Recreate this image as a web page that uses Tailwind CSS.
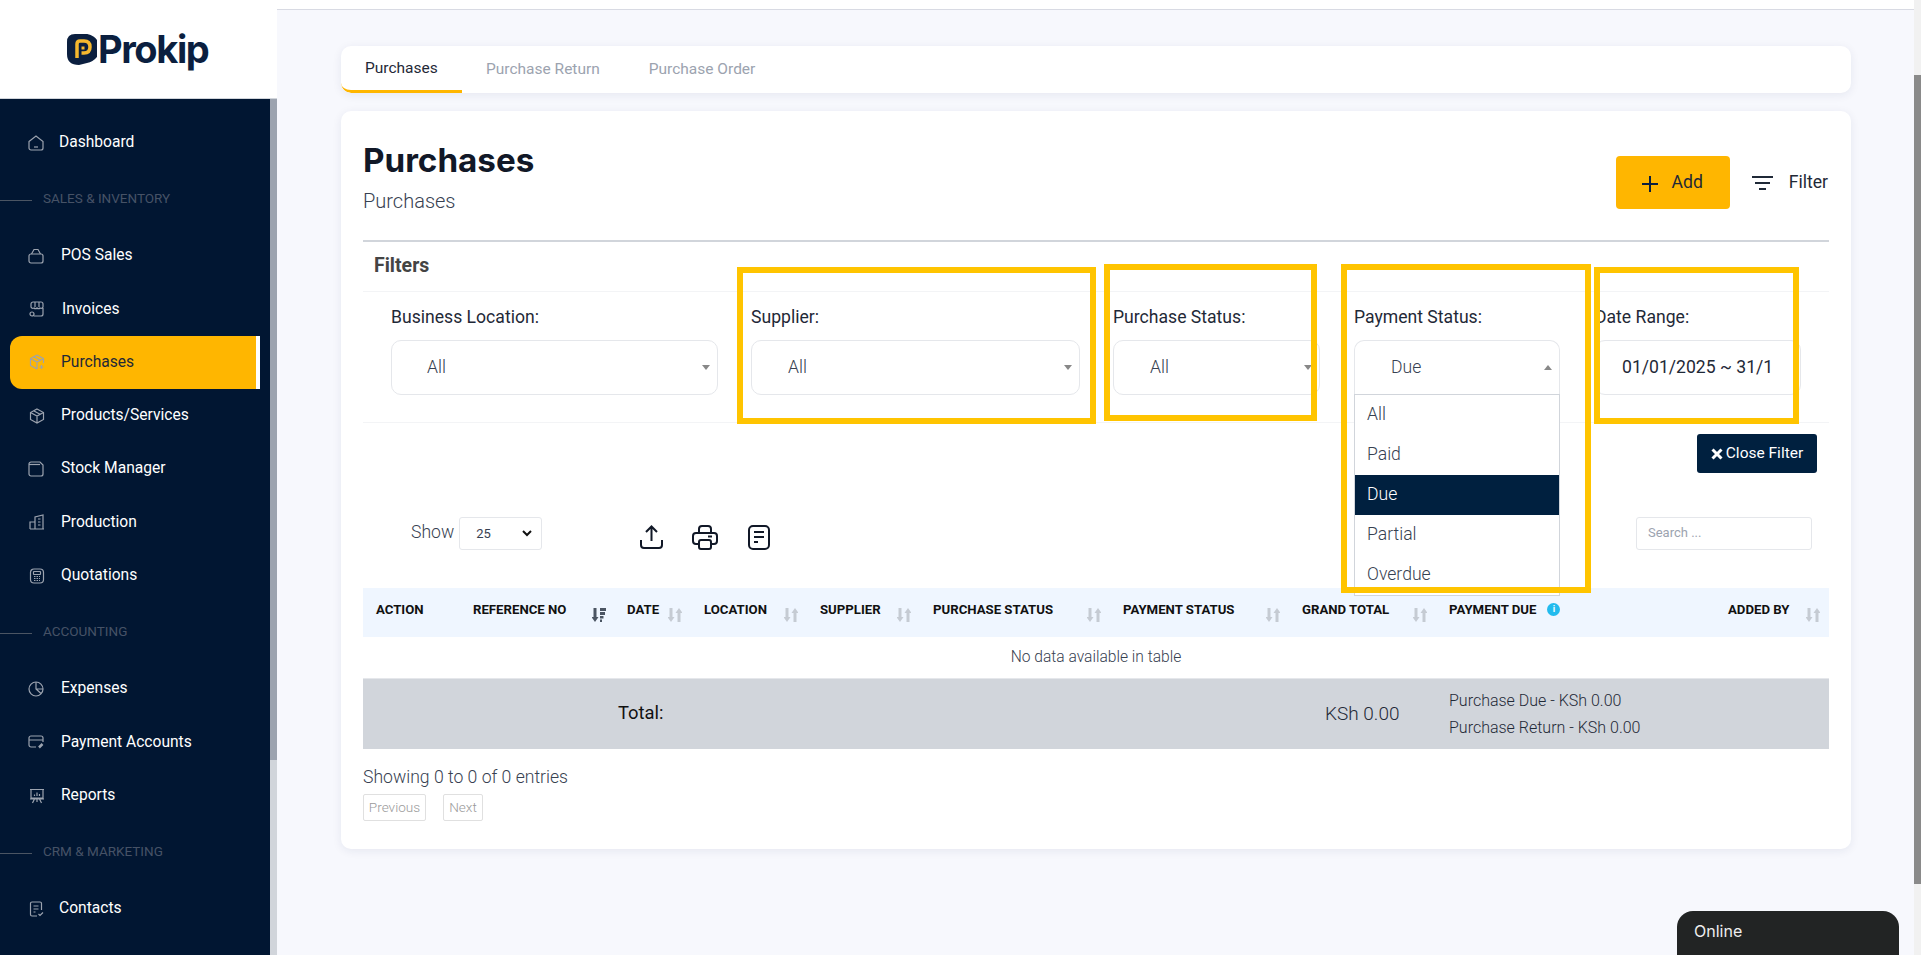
<!DOCTYPE html>
<html lang="en">
<head>
<meta charset="utf-8">
<title>Purchases</title>
<script src="https://cdn.jsdelivr.net/npm/@tailwindcss/browser@4"></script>
</head>
<body class="font-['Roboto',sans-serif] bg-[#f7f8fd]">
<div class="relative flex h-[955px] w-[1921px] overflow-hidden">

  <!-- sidebar -->
  <aside class="w-[277px] shrink-0 flex flex-col">
    <div class="h-[98px] bg-white flex items-center pl-[67px] shrink-0">
      <svg class="w-[30px] h-[31px] shrink-0" viewBox="0 0 30 31">
        <path d="M8 0H16A14.500 14.500 0 0 1 20 29L12 31Q0 31 0 20V8Q0 0 8 0Z" fill="#0b1f3f"/>
        <path d="M10 24V10Q10 7 13 7H17Q23 7 23 13T17 19H14.500" fill="none" stroke="#f5b82e" stroke-width="3.500"/>
        <path d="M14.500 14H17.500" stroke="#f5b82e" stroke-width="3"/>
      </svg>
      <span class="font-['Inter',sans-serif] font-bold text-[38px] tracking-[-1.4px] text-[#0b1f3f] ml-[1px]">Prokip</span>
    </div>
    <div class="flex flex-1 min-h-0 border-t border-[#d1d5db]">
      <nav class="w-[270px] bg-[#011632] pt-[17px] text-[15.600px] text-white overflow-hidden">
        <a class="h-[53.330px] flex items-center pl-[28px] gap-[15px]">
          <svg class="w-4 h-4 shrink-0 text-[#9ca3af]" viewBox="0 0 16 16" fill="none" stroke="currentColor" stroke-width="1.200"><path d="M1 6.500 8 1l7 5.500V13a2 2 0 0 1-2 2H3a2 2 0 0 1-2-2z"/><path d="M6 12h4"/></svg>
          <span>Dashboard</span>
        </a>
        <div class="h-[60px] flex items-center text-[13.500px] text-[#465266]"><span class="w-[32px] h-px bg-[#4b5563] mr-[11px] mt-[3px]"></span><span class="mt-[-2px]">SALES &amp; INVENTORY</span></div>
        <a class="h-[53.330px] flex items-center pl-[28px] gap-[17px]">
          <svg class="w-4 h-4 shrink-0 text-[#9ca3af]" viewBox="0 0 16 16" fill="none" stroke="currentColor" stroke-width="1.200"><path d="M1 8a2 2 0 0 1 2-2h10a2 2 0 0 1 2 2v5a2 2 0 0 1-2 2H3a2 2 0 0 1-2-2z"/><path d="M3.500 6 6 1.500h4L12.500 6"/></svg>
          <span>POS Sales</span>
        </a>
        <a class="h-[53.330px] flex items-center pl-[29px] gap-[17px]">
          <svg class="w-4 h-4 shrink-0 text-[#9ca3af]" viewBox="0 0 16 16" fill="none" stroke="currentColor" stroke-width="1.200"><path d="M2 6V3a2 2 0 0 1 2-2h8a2 2 0 0 1 2 2v3a2 2 0 0 1-3 1 2 2 0 0 1-3 0 2 2 0 0 1-3 0 2 2 0 0 1-3-1zM6 1v5M10 1v5M14 7v6a2 2 0 0 1-2 2H5"/><circle cx="3" cy="13" r="2"/></svg>
          <span>Invoices</span>
        </a>
        <a class="relative h-[53px] ml-[10px] mr-[10px] flex items-center pl-[19px] gap-[16px] bg-[#ffb600] rounded-l-[12px] border-r-4 border-white text-[#1f2937]">
          <svg class="w-4 h-4 shrink-0 text-[#9ca3af]" viewBox="0 0 16 16" fill="none" stroke="currentColor" stroke-width="1.200"><path d="M8 1 14.500 4.500V9M8 1 1.500 4.500v7L8 15M1.500 4.500 8 8l6.500-3.500M8 8v7M5 3l6.500 3.500"/><path d="M12.500 11v4M10.500 13h4"/></svg>
          <span>Purchases</span>
        </a>
        <a class="h-[53.330px] flex items-center pl-[29px] gap-[16px]">
          <svg class="w-4 h-4 shrink-0 text-[#9ca3af]" viewBox="0 0 16 16" fill="none" stroke="currentColor" stroke-width="1.200"><path d="M8 1l6.500 3.500v7L8 15l-6.500-3.500v-7zM1.500 4.500 8 8l6.500-3.500M8 8v7M5 3l6.500 3.500"/></svg>
          <span>Products/Services</span>
        </a>
        <a class="h-[53.330px] flex items-center pl-[28px] gap-[17px]">
          <svg class="w-4 h-4 shrink-0 text-[#9ca3af]" viewBox="0 0 16 16" fill="none" stroke="currentColor" stroke-width="1.200"><path d="M1 3a2 2 0 0 1 2-2h9l3 3v9a2 2 0 0 1-2 2H3a2 2 0 0 1-2-2z"/><path d="M1 3.500h11"/></svg>
          <span>Stock Manager</span>
        </a>
        <a class="h-[53.330px] flex items-center pl-[29px] gap-[16px]">
          <svg class="w-4 h-4 shrink-0 text-[#9ca3af]" viewBox="0 0 16 16" fill="none" stroke="currentColor" stroke-width="1.200"><path d="M1 15V8h5M6 15V3l8-2v14zM1 15h14M9 5h2.500M9 8h2.500M9 11h2.500"/></svg>
          <span>Production</span>
        </a>
        <a class="h-[53.330px] flex items-center pl-[29px] gap-[16px]">
          <svg class="w-4 h-4 shrink-0 text-[#9ca3af]" viewBox="0 0 16 16" fill="none" stroke="currentColor" stroke-width="1.200"><rect x="1.500" y="1" width="13" height="14" rx="3.500"/><rect x="4.500" y="3.500" width="7" height="3" rx=".5"/><path d="M5 8.500h6M5 10.500h6M5 12.500h6" stroke-dasharray="1.500 1"/></svg>
          <span>Quotations</span>
        </a>
        <div class="h-[60px] flex items-center text-[13.500px] text-[#465266]"><span class="w-[32px] h-px bg-[#4b5563] mr-[11px] mt-[3px]"></span><span class="mt-[-2px]">ACCOUNTING</span></div>
        <a class="h-[53.330px] flex items-center pl-[28px] gap-[17px]">
          <svg class="w-4 h-4 shrink-0 text-[#9ca3af]" viewBox="0 0 16 16" fill="none" stroke="currentColor" stroke-width="1.200"><circle cx="8" cy="8" r="7"/><path d="M8 1v7l5 4.500M8 8h7"/></svg>
          <span>Expenses</span>
        </a>
        <a class="h-[53.330px] flex items-center pl-[28px] gap-[17px]">
          <svg class="w-4 h-4 shrink-0 text-[#9ca3af]" viewBox="0 0 16 16" fill="none" stroke="currentColor" stroke-width="1.200"><path d="M8 13H3a2 2 0 0 1-2-2V4a2 2 0 0 1 2-2h10a2 2 0 0 1 2 2v4M1 6h14"/><path d="M11 13.500 14.500 10" stroke-width="2.500"/></svg>
          <span>Payment Accounts</span>
        </a>
        <a class="h-[53.330px] flex items-center pl-[29px] gap-[16px]">
          <svg class="w-4 h-4 shrink-0 text-[#9ca3af]" viewBox="0 0 16 16" fill="none" stroke="currentColor" stroke-width="1.200"><path d="M1 1.500h14M2 1.500V10h12V1.500M1 11h14M5.500 11 3.500 15M10.500 11l2 4M8 11v3M5.500 8V6.500M8 8V4.500M10.500 8V6"/></svg>
          <span>Reports</span>
        </a>
        <div class="h-[60px] flex items-center text-[13.500px] text-[#465266]"><span class="w-[32px] h-px bg-[#4b5563] mr-[11px] mt-[3px]"></span><span class="mt-[-2px]">CRM &amp; MARKETING</span></div>
        <a class="h-[53.330px] flex items-center pl-[29px] gap-[14px]">
          <svg class="w-4 h-4 shrink-0 text-[#9ca3af]" viewBox="0 0 16 16" fill="none" stroke="currentColor" stroke-width="1.200"><path d="M8 15H3a1.500 1.500 0 0 1-1.500-1.500v-11A1.500 1.500 0 0 1 3 1h8a1.500 1.500 0 0 1 1.500 1.500V9M4.500 5h5M4.500 8h5M4.500 11h2"/><path d="M9.500 13l1.500 1.500 3-3"/></svg>
          <span>Contacts</span>
        </a>
        <a class="h-[53.330px] flex items-center pl-[29px] gap-[14px]">
          <svg class="w-4 h-4 shrink-0 text-[#9ca3af] mt-[32px]" viewBox="0 0 16 16" fill="none" stroke="currentColor" stroke-width="1.200"><path d="M1.500 3a2 2 0 0 1 2-2h9a2 2 0 0 1 2 2v10H1.500z"/></svg>
        </a>
      </nav>
      <!-- sidebar scrollbar -->
      <div class="w-[7px] bg-[#d1d5db]"><div class="h-[661px] bg-[#9ca3af]"></div></div>
    </div>
  </aside>

  <!-- main -->
  <main class="flex-1 min-w-0">
    <div class="h-[10px] bg-white border-b border-[#d8dae3]"></div>
    <div class="ml-[64px] w-[1510px] mt-[36px]">

      <div class="h-[47px] bg-white rounded-[10px] shadow-[0_2px_10px_rgba(30,40,90,0.08)] flex text-[15.500px] overflow-hidden">
        <div class="w-[121px] h-full border-b-[3px] border-[#ffb600] rounded-bl-[10px] text-[#1f2937] pl-[24px] pt-[11px]">Purchases</div>
        <div class="pl-[24px] pt-[12px] text-[#9ca3af]">Purchase Return</div>
        <div class="pl-[49px] pt-[12px] text-[#9ca3af]">Purchase Order</div>
      </div>

      <section class="mt-[18px] h-[738px] bg-white rounded-[10px] shadow-[0_2px_10px_rgba(30,40,90,0.08)] px-[22px]">
        <div class="h-[131px] flex justify-between border-b-2 border-[#d1d5db]">
          <div>
            <h1 class="font-['Inter',sans-serif] font-bold text-[33.200px] leading-[40px] text-[#111827] mt-[29px]">Purchases</h1>
            <p class="text-[20px] font-light text-[#374151] mt-[6px]">Purchases</p>
          </div>
          <div class="flex items-start pt-[45px]">
            <button class="w-[114px] h-[53px] bg-[#ffb600] rounded-[4px] flex items-center justify-center gap-[13px] text-[17.600px] text-[#1f2937]">
              <svg class="w-[16px] h-[16px] mt-[2px]" viewBox="0 0 16 16" fill="none" stroke="#0b1f3f" stroke-width="2"><path d="M8 0v16M0 8h16"/></svg>
              Add
            </button>
            <div class="flex items-center h-[53px] ml-[22px] mr-[1px] gap-[16px] text-[17.600px] text-[#1f2937]">
              <svg class="w-[21px] h-[16px]" viewBox="0 0 21 16" fill="none" stroke="#1f2937" stroke-width="2"><path d="M0 2h21M3 8h15M7 14h7"/></svg>
              Filter
            </div>
          </div>
        </div>

        <h2 class="h-[50px] leading-[47px] pl-[11px] text-[19.500px] font-bold text-[#444] border-b border-[#f3f4f6]">Filters</h2>

        <div class="h-[131px] pl-[28px] pt-[12px] flex border-b border-[#f3f4f6]">
          <div class="w-[327px] shrink-0">
            <label class="block text-[17.600px] h-[36px] text-[#1f2937]">Business Location:</label>
            <div class="relative h-[55px] border border-[#e5e7eb] rounded-[10px] pl-[35px] leading-[53px] text-[17.600px] font-light text-[#374151]">All<span class="absolute right-[7px] top-[24px] border-x-4 border-x-transparent border-t-[5px] border-t-[#888]"></span></div>
          </div>
          <div class="w-[329px] shrink-0 ml-[33px]">
            <label class="block text-[17.600px] h-[36px] text-[#1f2937]">Supplier:</label>
            <div class="relative h-[55px] border border-[#e5e7eb] rounded-[10px] pl-[36px] leading-[53px] text-[17.600px] font-light text-[#374151]">All<span class="absolute right-[7px] top-[24px] border-x-4 border-x-transparent border-t-[5px] border-t-[#888]"></span></div>
          </div>
          <div class="w-[207px] shrink-0 ml-[33px]">
            <label class="block text-[17.600px] h-[36px] text-[#1f2937]">Purchase Status:</label>
            <div class="relative h-[55px] border border-[#e5e7eb] rounded-[10px] pl-[36px] leading-[53px] text-[17.600px] font-light text-[#374151]">All<span class="absolute right-[7px] top-[24px] border-x-4 border-x-transparent border-t-[5px] border-t-[#888]"></span></div>
          </div>
          <div class="relative w-[206px] shrink-0 ml-[34px]">
            <label class="block text-[17.600px] h-[36px] text-[#1f2937]">Payment Status:</label>
            <div class="relative h-[55px] border border-b-0 border-[#e5e7eb] rounded-t-[10px] pl-[36px] leading-[53px] text-[17.600px] font-light text-[#374151]">Due<span class="absolute right-[7px] top-[24px] border-x-4 border-x-transparent border-b-[5px] border-b-[#888]"></span></div>
            <ul class="absolute z-10 left-0 top-[90px] w-[206px] bg-white border border-[#d1d5db] text-[17.600px] font-light text-[#374151]">
              <li class="h-[40px] leading-[38px] pl-[12px]">All</li>
              <li class="h-[40px] leading-[38px] pl-[12px]">Paid</li>
              <li class="h-[40px] leading-[38px] pl-[12px] bg-[#00203f] text-white">Due</li>
              <li class="h-[40px] leading-[38px] pl-[12px]">Partial</li>
              <li class="h-[40px] leading-[38px] pl-[12px]">Overdue</li>
            </ul>
          </div>
          <div class="w-[206px] shrink-0 ml-[35px]">
            <label class="block text-[17.600px] h-[36px] text-[#1f2937]">Date Range:</label>
            <div class="h-[55px] border border-[#e5e7eb] rounded-[10px] pl-[26px] leading-[53px] text-[17.600px] text-[#1f2937] whitespace-nowrap">01/01/2025 ~ 31/1</div>
          </div>
        </div>

        <div class="flex justify-end pr-[12px] pt-[11px] h-[92px]">
          <button class="w-[120px] h-[39px] bg-[#00203f] text-white text-[15.500px] rounded-[3px] flex items-center justify-center gap-[3px]">
            <svg class="w-[12px] h-[12px]" viewBox="0 0 12 12" fill="none" stroke="white" stroke-width="3"><path d="M1.500 1.500l9 9M10.500 1.500l-9 9"/></svg>
            Close Filter
          </button>
        </div>

        <div class="flex items-start h-[73px] pl-[48px]">
          <span class="text-[17.600px] font-light text-[#374151] mt-[4px]">Show</span>
          <div class="ml-[5px] w-[83px] h-[33px] border border-[#e5e7eb] rounded-[3px] flex items-center justify-between pl-[16px] pr-[9px] text-[13px] text-[#374151] mt-[2px]">
            25
            <svg class="w-[10px] h-[7px]" viewBox="0 0 10 7" fill="none" stroke="#111" stroke-width="2"><path d="M1 1l4 4 4-4"/></svg>
          </div>
          <svg class="w-[25px] h-[25px] ml-[97px] mt-[10px]" viewBox="0 0 25 25" fill="none" stroke="#111827" stroke-width="2"><path d="M2 15v5a3 3 0 0 0 3 3h15a3 3 0 0 0 3-3v-5M12.500 16V2M7 7l5.500-5.500L18 7"/></svg>
          <svg class="w-[26px] h-[26px] ml-[28px] mt-[10px]" viewBox="0 0 26 26" fill="none" stroke="#111827" stroke-width="2"><path d="M7 8V4a3 3 0 0 1 3-3h6a3 3 0 0 1 3 3v4M7 19H4a3 3 0 0 1-3-3v-5a3 3 0 0 1 3-3h18a3 3 0 0 1 3 3v5a3 3 0 0 1-3 3h-3"/><rect x="7" y="15" width="12" height="9" rx="2"/><path d="M16 11.500h4"/></svg>
          <svg class="w-[22px] h-[25px] ml-[30px] mt-[10px]" viewBox="0 0 22 25" fill="none" stroke="#111827" stroke-width="2"><rect x="1" y="1" width="20" height="23" rx="4"/><path d="M6 7h10M6 12h10M6 17h4"/></svg>
          <div class="ml-auto mr-[17px] mt-[2px] w-[176px] h-[33px] border border-[#e5e7eb] rounded-[3px] pl-[11px] leading-[29px] text-[13px] text-[#9ca3af]">Search ...</div>
        </div>

        <table class="w-[1466px] table-fixed text-left">
          <colgroup>
            <col class="w-[97px]"><col class="w-[154px]"><col class="w-[77px]"><col class="w-[116px]"><col class="w-[113px]"><col class="w-[190px]"><col class="w-[179px]"><col class="w-[147px]"><col class="w-[279px]"><col class="w-[114px]">
          </colgroup>
          <thead class="bg-[#eff6ff] text-[13.200px] font-bold text-[#111]">
            <tr class="h-[49px]">
              <th class="pl-[13px] pb-[5px] font-bold">ACTION</th>
              <th class="pl-[13px] pb-[5px] font-bold"><span class="flex justify-between pr-[8px] items-center">REFERENCE NO<svg class="w-[14px] h-[14px] mt-[10px]" viewBox="0 0 14 14" fill="#4b5563"><path d="M1.500 0h3v9H6.500L3 14-.5 9h2zM8 0h6v3H8zM8 4h5v3H8zM8 8h3.500v2.500H8zM8 11.500h2V14H8z"/></svg></span></th>
              <th class="pl-[13px] pb-[5px] font-bold"><span class="flex justify-between pr-[9px] items-center">DATE<svg class="w-[14px] h-[14px] mt-[10px]" viewBox="0 0 14 14" fill="#c5cbd3"><path d="M1.500 0h3v9H6.500L3 14-.5 9h2zM12.500 14h-3V5h-2L11 0l3.500 5h-2z"/></svg></span></th>
              <th class="pl-[13px] pb-[5px] font-bold"><span class="flex justify-between pr-[9px] items-center">LOCATION<svg class="w-[14px] h-[14px] mt-[10px]" viewBox="0 0 14 14" fill="#c5cbd3"><path d="M1.500 0h3v9H6.500L3 14-.5 9h2zM12.500 14h-3V5h-2L11 0l3.500 5h-2z"/></svg></span></th>
              <th class="pl-[13px] pb-[5px] font-bold"><span class="flex justify-between pr-[9px] items-center">SUPPLIER<svg class="w-[14px] h-[14px] mt-[10px]" viewBox="0 0 14 14" fill="#c5cbd3"><path d="M1.500 0h3v9H6.500L3 14-.5 9h2zM12.500 14h-3V5h-2L11 0l3.500 5h-2z"/></svg></span></th>
              <th class="pl-[13px] pb-[5px] font-bold"><span class="flex justify-between pr-[9px] items-center">PURCHASE STATUS<svg class="w-[14px] h-[14px] mt-[10px]" viewBox="0 0 14 14" fill="#c5cbd3"><path d="M1.500 0h3v9H6.500L3 14-.5 9h2zM12.500 14h-3V5h-2L11 0l3.500 5h-2z"/></svg></span></th>
              <th class="pl-[13px] pb-[5px] font-bold"><span class="flex justify-between pr-[9px] items-center">PAYMENT STATUS<svg class="w-[14px] h-[14px] mt-[10px]" viewBox="0 0 14 14" fill="#c5cbd3"><path d="M1.500 0h3v9H6.500L3 14-.5 9h2zM12.500 14h-3V5h-2L11 0l3.500 5h-2z"/></svg></span></th>
              <th class="pl-[13px] pb-[5px] font-bold"><span class="flex justify-between pr-[9px] items-center">GRAND TOTAL<svg class="w-[14px] h-[14px] mt-[10px]" viewBox="0 0 14 14" fill="#c5cbd3"><path d="M1.500 0h3v9H6.500L3 14-.5 9h2zM12.500 14h-3V5h-2L11 0l3.500 5h-2z"/></svg></span></th>
              <th class="pl-[13px] pb-[5px] font-bold"><span class="flex items-center gap-[11px]">PAYMENT DUE<span class="w-[13px] h-[13px] rounded-full bg-[#22bbee] text-white text-[9px] leading-[13px] text-center">i</span></span></th>
              <th class="pl-[13px] pb-[5px] font-bold"><span class="flex justify-between pr-[9px] items-center">ADDED BY<svg class="w-[14px] h-[14px] mt-[10px]" viewBox="0 0 14 14" fill="#c5cbd3"><path d="M1.500 0h3v9H6.500L3 14-.5 9h2zM12.500 14h-3V5h-2L11 0l3.500 5h-2z"/></svg></span></th>
            </tr>
          </thead>
          <tbody>
            <tr class="h-[41px] border-b border-[#e5e7eb]">
              <td colspan="10" class="text-center text-[15.600px] font-light text-[#374151]">No data available in table</td>
            </tr>
          </tbody>
          <tfoot class="bg-[#d1d5db]">
            <tr class="h-[71px]">
              <td colspan="2"></td>
              <td colspan="2" class="pl-[4px] pb-[2px] text-[18.400px] text-[#111]">Total:</td>
              <td colspan="3"></td>
              <td class="pl-[36px] text-[19px] font-light text-[#1f2937]">KSh 0.00</td>
              <td colspan="2" class="pl-[13px] text-[16px] font-light text-[#1f2937] leading-[27px]">Purchase Due - KSh 0.00<br>Purchase Return - KSh 0.00</td>
            </tr>
          </tfoot>
        </table>

        <p class="text-[17.600px] font-light text-[#374151] mt-[16px] leading-[24px]">Showing 0 to 0 of 0 entries</p>
        <div class="flex gap-[17px] mt-[5px] text-[13.600px] font-light text-[#9a9a9a]">
          <span class="w-[63px] h-[27px] border border-[#e0e0e0] rounded-[2px] text-center leading-[24px]">Previous</span>
          <span class="w-[40px] h-[27px] border border-[#e0e0e0] rounded-[2px] text-center leading-[24px]">Next</span>
        </div>
      </section>
    </div>
  </main>

  <!-- page scrollbar -->
  <div class="w-[7px] shrink-0 bg-[#f1f1f1]"><div class="mt-[75px] h-[809px] bg-[#8a8a8a]"></div></div>

  <!-- annotation boxes drawn over the screenshot -->
  <div class="absolute z-20 left-[737px] top-[267px] w-[359px] h-[157px] border-[6px] border-[#ffc400]"></div>
  <div class="absolute z-20 left-[1104px] top-[264px] w-[213px] h-[157px] border-[6px] border-[#ffc400]"></div>
  <div class="absolute z-20 left-[1341px] top-[264px] w-[250px] h-[329px] border-[6px] border-[#ffc400]"></div>
  <div class="absolute z-20 left-[1594px] top-[267px] w-[205px] h-[157px] border-[6px] border-[#ffc400]"></div>

  <!-- chat widget -->
  <div class="absolute z-30 left-[1677px] top-[911px] w-[222px] h-[44px] bg-[#222424] rounded-t-[16px] pl-[17px] pt-[8px] font-['Inter',sans-serif] text-[16px] text-[#eee]">Online</div>
</div>
</body>
</html>
